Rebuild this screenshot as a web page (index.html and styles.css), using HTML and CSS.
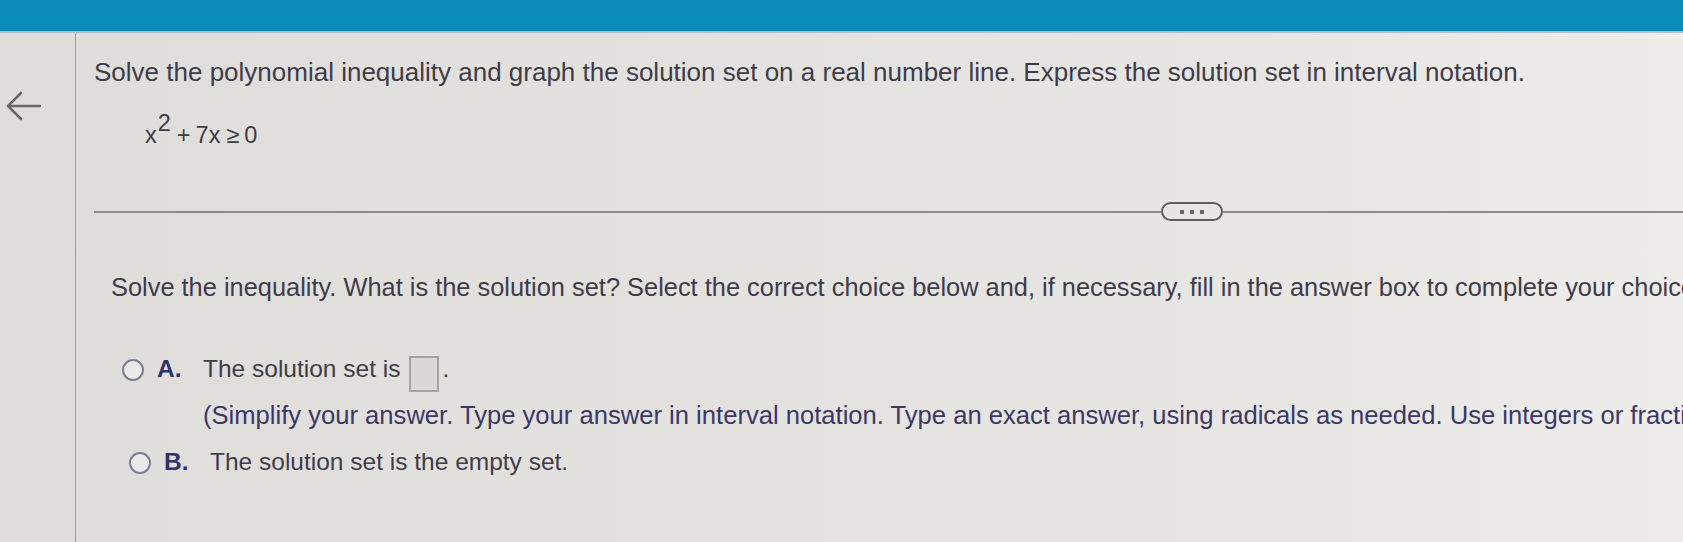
FILE: index.html
```html
<!DOCTYPE html>
<html lang="en">
<head>
<meta charset="utf-8">
<title>Polynomial inequality</title>
<link rel="stylesheet" href="styles.css">
</head>
<body>
<div class="topbar"></div>
<div class="page">
  <aside class="sidebar">
    <svg class="back" viewBox="0 0 36 30" aria-label="Back">
      <path d="M35 15 H3 M16 2 L3 15 L16 28" fill="none" stroke="#686868" stroke-width="2.6" stroke-linecap="round" stroke-linejoin="round"/>
    </svg>
  </aside>
  <main class="main">
    <p class="prompt">Solve the polynomial inequality and graph the solution set on a real number line. Express the solution set in interval notation.</p>
    <p class="equation">x<span class="sup">2</span><span class="op">+</span>7x<span class="op">≥</span>0</p>
    <div class="divider">
      <span class="rule rule-left"></span>
      <span class="more"><i></i><i></i><i></i></span>
      <span class="rule"></span>
    </div>
    <p class="question">Solve the inequality. What is the solution set? Select the correct choice below and, if necessary, fill in the answer box to complete your choice.</p>
    <div class="options">
      <div class="option option-a">
        <span class="radio"></span>
        <span class="letter">A.</span>
        <div class="body">
          <div class="line">The solution set is<span class="answer-box"></span>.</div>
          <div class="hint">(Simplify your answer. Type your answer in interval notation. Type an exact answer, using radicals as needed. Use integers or fractions for any numbers in the expression.)</div>
        </div>
      </div>
      <div class="option option-b">
        <span class="radio"></span>
        <span class="letter">B.</span>
        <div class="body">
          <div class="line">The solution set is the empty set.</div>
        </div>
      </div>
    </div>
  </main>
</div>
</body>
</html>
```
FILE: styles.css
```css
html, body {
  margin: 0;
  height: 100%;
  overflow: hidden;
}

body {
  background: linear-gradient(90deg, #dfddda 0%, #e4e2df 45%, #e8e7e4 80%, #eeedeb 100%);
  font-family: "Liberation Sans", Arial, Helvetica, sans-serif;
  color: #3f3c49;
}

.topbar {
  height: 31px;
  background: #0b8bb7;
  border-bottom: 2px solid #a9c3cc;
}

.page {
  display: flex;
  height: 509px;
}

.sidebar {
  flex: none;
  width: 76px;
  box-sizing: border-box;
  padding: 58px 0 0 5px;
  border-right: 1px solid #9e9c9a;
}

.back {
  display: block;
  width: 36px;
  height: 30px;
}

.main {
  flex: 1;
  min-width: 0;
  padding-left: 18px;
  overflow: hidden;
  white-space: nowrap;
}

.prompt {
  margin: 24px 0 0;
  font-size: 26px;
  line-height: 30px;
}

.equation {
  margin: 25px 0 0 51px;
  font-size: 23.5px;
  line-height: 44px;
}

.sup {
  vertical-align: 12px;
  line-height: 1;
  margin-left: 1px;
}

.op {
  margin: 0 5px 0 6px;
}

.divider {
  display: flex;
  align-items: center;
  height: 19px;
  margin-top: 45px;
}

.rule {
  flex: 1;
  height: 2px;
  background: #8e8c8a;
}

.rule-left {
  flex: 0 0 1067px;
}

.more {
  flex: none;
  width: 62px;
  height: 19px;
  box-sizing: border-box;
  border: 2px solid #5e5d62;
  border-radius: 10px;
  display: flex;
  justify-content: center;
  align-items: center;
  gap: 6px;
}

.more i {
  width: 4px;
  height: 4px;
  background: #66656c;
}

.question {
  margin: 51px 0 0 17px;
  font-size: 25.4px;
  line-height: 30px;
}

.options {
  margin-top: 52px;
  padding-left: 28px;
}

.option {
  display: flex;
  align-items: flex-start;
  font-size: 24.5px;
  line-height: 30px;
}

.option-b {
  margin-top: 17px;
  padding-left: 7px;
}

.radio {
  flex: none;
  width: 22px;
  height: 22px;
  box-sizing: border-box;
  margin-top: 5px;
  border: 2px solid #7b7e98;
  border-radius: 50%;
  background: #ebeae8;
}

.letter {
  flex: none;
  width: 46px;
  margin-left: 13px;
  font-weight: bold;
  color: #33336c;
}

.answer-box {
  display: inline-block;
  width: 30px;
  height: 36px;
  box-sizing: border-box;
  margin: 0 3px 0 9px;
  border: 2px solid #a4a3a2;
  background: #d9d8d6;
  vertical-align: -15px;
}

.hint {
  margin-top: 8px;
  font-size: 25.6px;
  color: #3b3867;
}
```
